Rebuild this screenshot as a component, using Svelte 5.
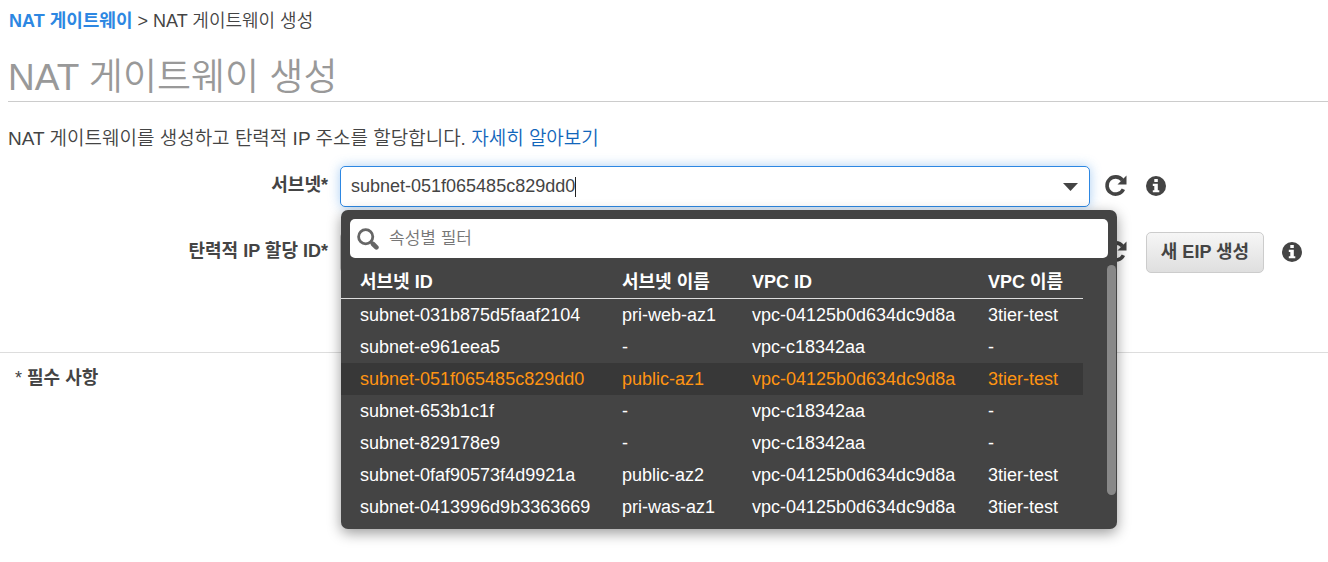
<script>
  let subnetId = $state("subnet-051f065485c829dd0");
  let eipId = $state("");
  let filter = $state("");

  const columns = ["서브넷 ID", "서브넷 이름", "VPC ID", "VPC 이름"];

  const subnets = [
    { id: "subnet-031b875d5faaf2104", name: "pri-web-az1", vpc: "vpc-04125b0d634dc9d8a", vpcName: "3tier-test" },
    { id: "subnet-e961eea5", name: "-", vpc: "vpc-c18342aa", vpcName: "-" },
    { id: "subnet-051f065485c829dd0", name: "public-az1", vpc: "vpc-04125b0d634dc9d8a", vpcName: "3tier-test" },
    { id: "subnet-653b1c1f", name: "-", vpc: "vpc-c18342aa", vpcName: "-" },
    { id: "subnet-829178e9", name: "-", vpc: "vpc-c18342aa", vpcName: "-" },
    { id: "subnet-0faf90573f4d9921a", name: "public-az2", vpc: "vpc-04125b0d634dc9d8a", vpcName: "3tier-test" },
    { id: "subnet-0413996d9b3363669", name: "pri-was-az1", vpc: "vpc-04125b0d634dc9d8a", vpcName: "3tier-test" }
  ];

  let shown = $derived(
    subnets.filter((s) => Object.values(s).some((value) => value.includes(filter)))
  );
</script>

{#snippet refreshIcon()}
  <svg width="24" height="24" viewBox="0 0 24 24" aria-hidden="true">
    <path d="M18.4 6.2A8.6 8.6 0 1 0 19.4 15.2" fill="none" stroke="#444" stroke-width="3.6" />
    <path d="M22.5 1.5v9h-9z" fill="#444" />
  </svg>
{/snippet}

{#snippet infoIcon()}
  <svg width="20" height="20" viewBox="0 0 20 20" aria-hidden="true">
    <circle cx="10" cy="10" r="10" fill="#444" />
    <path d="M8.3 3h3.5v3.1H8.3zM6.8 7.8h5v6.4h1.5v2.1H6.8v-2.1h1.5V9.9H6.8z" fill="#fff" />
  </svg>
{/snippet}

{#snippet arrowIcon()}
  <svg width="15" height="8" viewBox="0 0 15 8" aria-hidden="true">
    <path d="M0 0h15L7.5 8z" fill="#444" />
  </svg>
{/snippet}

<main>
  <nav><a href="#nat">NAT 게이트웨이</a> &gt; NAT 게이트웨이 생성</nav>
  <h1>NAT 게이트웨이 생성</h1>
  <p class="intro">
    NAT 게이트웨이를 생성하고 탄력적 IP 주소를 할당합니다. <a href="#more">자세히 알아보기</a>
  </p>

  <form>
    <div class="row">
      <label for="subnet">서브넷*</label>
      <div class="combo active">
        <input id="subnet" type="text" autocomplete="off" bind:value={subnetId} />
        <span class="caret"></span>
        <button type="button" class="toggle" aria-label="서브넷 목록">{@render arrowIcon()}</button>

        <div class="dropdown">
          <div class="search">
            <svg width="22" height="22" viewBox="0 0 22 22" aria-hidden="true">
              <circle cx="8.7" cy="8.7" r="7.1" fill="none" stroke="#666" stroke-width="2.8" />
              <path d="M14 14l1.5 1.5" stroke="#666" stroke-width="3" />
              <path d="M16 16l3.4 3.4" stroke="#666" stroke-width="4.6" stroke-linecap="round" />
            </svg>
            <input type="text" placeholder="속성별 필터" aria-label="속성별 필터" bind:value={filter} />
          </div>
          <div class="list">
            <table>
              <thead>
                <tr>
                  {#each columns as column}
                    <th>{column}</th>
                  {/each}
                </tr>
              </thead>
              <tbody>
                {#each shown as subnet}
                  <tr class:selected={subnet.id === subnetId} onclick={() => (subnetId = subnet.id)}>
                    <td>{subnet.id}</td>
                    <td>{subnet.name}</td>
                    <td>{subnet.vpc}</td>
                    <td>{subnet.vpcName}</td>
                  </tr>
                {/each}
              </tbody>
            </table>
            <div class="scrollbar"></div>
          </div>
        </div>
      </div>
      <div class="actions">
        <button type="button" class="icon" aria-label="새로 고침">{@render refreshIcon()}</button>
        <button type="button" class="icon" aria-label="정보">{@render infoIcon()}</button>
      </div>
    </div>

    <div class="row">
      <label for="eip">탄력적 IP 할당 ID*</label>
      <div class="combo">
        <input id="eip" type="text" autocomplete="off" bind:value={eipId} />
        <button type="button" class="toggle" aria-label="탄력적 IP 목록">{@render arrowIcon()}</button>
      </div>
      <div class="actions">
        <button type="button" class="icon" aria-label="새로 고침">{@render refreshIcon()}</button>
        <button type="button" class="create">새 EIP 생성</button>
        <button type="button" class="icon" aria-label="정보">{@render infoIcon()}</button>
      </div>
    </div>
  </form>

  <footer><span>*</span> 필수 사항</footer>
</main>

<style>
  :global(body) {
    margin: 0;
    background: #fff;
  }

  main,
  input,
  button {
    font-family: "Liberation Sans", "Noto Sans CJK KR", sans-serif;
    font-size: 18px;
    font-weight: 350;
    color: #444;
  }

  main {
    box-sizing: border-box;
    min-height: 100vh;
    padding-top: 9px;
    line-height: 24px;
  }

  nav {
    padding-left: 9px;

    a {
      color: #2d87e2;
      font-weight: bold;
      text-decoration: none;
    }
  }

  h1 {
    margin: 22px 0 0 8px;
    border-bottom: 1px solid #ccc;
    color: #999;
    font-size: 37px;
    font-weight: 350;
    line-height: 46px;
  }

  .intro {
    margin: 25px 0 0 8px;
    font-size: 19px;

    a {
      color: #1166bb;
      text-decoration: none;
    }
  }

  form {
    display: flex;
    flex-direction: column;
    gap: 25px;
    padding: 15px 0 79px;
    border-bottom: 1px solid #ddd;
  }

  .row {
    display: flex;
    height: 41px;
  }

  label {
    width: 328px;
    margin-right: 12px;
    padding-top: 7px;
    text-align: right;
    font-weight: bold;
  }

  .combo {
    position: relative;
    flex: 1;
    display: flex;
    align-items: center;
    box-sizing: border-box;
    border: 1px solid #ccc;
    border-radius: 5px;
    padding: 0 11px 0 10px;
    background: #fff;

    > input {
      field-sizing: content;
      min-width: 1px;
      padding: 0;
      border: 0;
      outline: none;
      background: none;
    }
  }

  .active {
    border-color: #2d87e2;
    box-shadow: 0 0 12px rgba(45, 135, 226, 0.4);
  }

  .caret {
    width: 1px;
    height: 20px;
    background: #222;
  }

  button {
    cursor: pointer;
  }

  .toggle,
  .icon {
    display: flex;
    padding: 0;
    border: 0;
    background: none;
  }

  .toggle {
    margin-left: auto;
  }

  .actions {
    width: 224px;
    display: flex;
    align-items: center;
    gap: 18px;
    padding-left: 14px;
  }

  .icon {
    padding-bottom: 1px;
  }

  .create {
    box-sizing: border-box;
    width: 118px;
    height: 41px;
    padding: 0 0 6px;
    border: 1px solid #ccc;
    border-radius: 5px;
    background: linear-gradient(#f6f6f6, #dfdfdf);
    font-weight: bold;
  }

  .dropdown {
    position: absolute;
    z-index: 1;
    top: 43px;
    left: 0;
    right: -28px;
    box-sizing: border-box;
    padding-top: 9px;
    padding-bottom: 6px;
    border-radius: 7px;
    background: #444;
    box-shadow: 0 4px 14px rgba(0, 0, 0, 0.4);
  }

  .search {
    display: flex;
    align-items: center;
    gap: 10px;
    height: 39px;
    margin: 0 9px;
    padding: 0 7px;
    border-radius: 5px;
    background: #fff;

    input {
      flex: 1;
      padding: 0;
      border: 0;
      outline: none;
      font-size: 17px;
    }

    input::placeholder {
      color: #777;
    }
  }

  .list {
    display: flex;
    justify-content: space-between;
    padding-top: 7px;
  }

  table {
    flex: 1;
    margin-right: 24px;
    border-collapse: collapse;
    table-layout: fixed;
    color: #fff;
    text-align: left;
  }

  th,
  td {
    height: 32px;
    padding: 0 0 0 19px;
    white-space: nowrap;
  }

  th {
    height: 33px;
    border-bottom: 1px solid #ddd;

    &:nth-child(1) {
      width: 243px;
    }

    &:nth-child(2) {
      width: 111px;
    }

    &:nth-child(3) {
      width: 217px;
    }
  }

  .selected {
    background: #383838;
    color: #ff9412;
  }

  .scrollbar {
    width: 9px;
    height: 230px;
    margin-right: 1px;
    border-radius: 5px;
    background: #888;
  }

  footer {
    padding: 13px 15px;
    font-weight: bold;

    span {
      font-weight: 350;
    }
  }
</style>
